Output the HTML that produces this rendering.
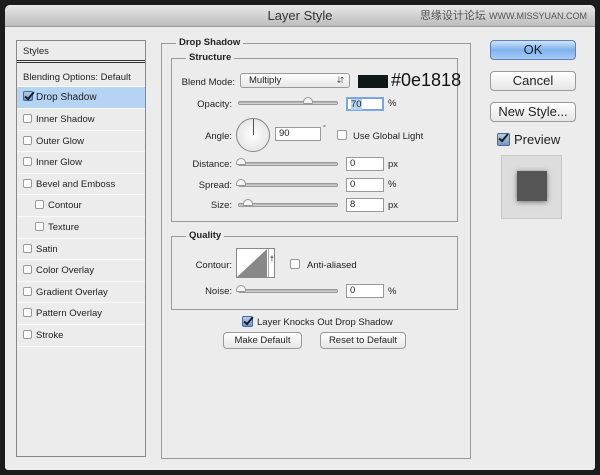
<!DOCTYPE html>
<html><head><meta charset="utf-8"><style>
*{margin:0;padding:0;box-sizing:border-box}
body{width:600px;height:475px;background:#1c1c1c;font-family:"Liberation Sans","Noto Sans CJK SC",sans-serif;font-size:9.5px;color:#222;position:relative;overflow:hidden}
.win{position:absolute;left:5px;top:5px;width:590px;height:465px;background:#ececec;border-radius:5px 5px 3px 3px;overflow:hidden}
.title{position:absolute;left:0;top:0;width:590px;height:22px;background:linear-gradient(#e8e8e8,#bdbdbd);border-bottom:1px solid #999;text-align:center;font-size:13px;line-height:22px;color:#333}
.wm{position:absolute;right:8px;top:4px;font-size:11px;color:#555;line-height:14px}
.a{position:absolute}
.panel{position:absolute;left:16px;top:40px;width:130px;height:417px;border:1px solid #888;background:#ececec}
.row{position:absolute;left:0;width:128px;height:21.6px;border-bottom:1px solid #fafafa;line-height:21px;padding-left:6px;font-size:9.5px}
.cb{display:inline-block;width:9px;height:9px;border:1px solid #999;border-radius:2px;background:#fff;vertical-align:-1px;margin-right:4px}
.chk{display:inline-block;width:10px;height:10px;border:1px solid #46a;border-radius:2px;background:linear-gradient(#bcd,#79b);vertical-align:-1px;margin-right:3px;position:relative}
.chk:after{content:"";position:absolute;left:3px;top:-2px;width:3px;height:8px;border:solid #123;border-width:0 2px 2px 0;transform:rotate(40deg)}
.chk.a{position:absolute}
.box{position:absolute;border:1px solid #999}
.leg{position:absolute;background:#ececec;font-weight:bold;padding:0 3px;font-size:9.5px}
.lbl{position:absolute;text-align:right;font-size:9.5px}
.sl{position:absolute;height:4px;border:1px solid #999;border-radius:2px;background:linear-gradient(#aaa,#ddd)}
.th{position:absolute;width:10px;height:7px;background:#f4f4f4;border:1px solid #999;border-radius:5px 5px 1px 1px}
.in{position:absolute;height:14px;border:1px solid #999;background:#fff;font-size:9.5px;line-height:12px;padding-left:3px}
.btn{position:absolute;border:1px solid #999;border-radius:4px;background:linear-gradient(#fff,#e6e6e6);text-align:center}
</style></head><body>
<div class="win">
<div class="title">Layer Style<div class="wm">思缘设计论坛 <span style="font-size:9px">WWW.MISSYUAN.COM</span></div></div>
</div>
<div class="panel">
<div class="row" style="top:0;height:22px;border-bottom:3px double #333">Styles</div>
<div class="row" style="top:26px;height:20px">Blending Options: Default</div>
<div class="row" style="top:46px;height:22px;background:#b5d3f3;font-size:10px"><span class="chk"></span>Drop Shadow</div>
<div class="row" style="top:68px"><span class="cb"></span>Inner Shadow</div>
<div class="row" style="top:89.6px"><span class="cb"></span>Outer Glow</div>
<div class="row" style="top:111.2px"><span class="cb"></span>Inner Glow</div>
<div class="row" style="top:132.8px"><span class="cb"></span>Bevel and Emboss</div>
<div class="row" style="top:154.4px;padding-left:18px"><span class="cb"></span>Contour</div>
<div class="row" style="top:176px;padding-left:18px"><span class="cb"></span>Texture</div>
<div class="row" style="top:197.6px"><span class="cb"></span>Satin</div>
<div class="row" style="top:219.2px"><span class="cb"></span>Color Overlay</div>
<div class="row" style="top:240.8px"><span class="cb"></span>Gradient Overlay</div>
<div class="row" style="top:262.4px"><span class="cb"></span>Pattern Overlay</div>
<div class="row" style="top:284px"><span class="cb"></span>Stroke</div>
</div>

<div class="box" style="left:161px;top:43px;width:310px;height:416px"></div>
<div class="leg" style="left:176px;top:37px">Drop Shadow</div>
<div class="box" style="left:171px;top:58px;width:287px;height:164px"></div>
<div class="leg" style="left:186px;top:52px">Structure</div>

<div class="lbl" style="left:170px;width:65px;top:77px">Blend Mode:</div>
<div class="btn" style="left:240px;top:73px;width:110px;height:15px;border-radius:3px;text-align:left;padding-left:8px;line-height:13px">Multiply<span style="position:absolute;right:5px;font-size:7px">&#8693;</span></div>
<div class="a" style="left:358px;top:75px;width:30px;height:13px;background:#0e1818"></div>
<div class="a" style="left:391px;top:70px;font-size:18px;color:#111;line-height:20px">#0e1818</div>

<div class="lbl" style="left:170px;width:62px;top:99px">Opacity:</div>
<div class="sl" style="left:238px;top:101px;width:100px"></div><div class="th" style="left:303px;top:97px"></div>
<div class="in" style="left:346px;top:97px;width:38px;border:2px solid #7aa7e0;background:#fff"><span style="background:#b5d3f3">70</span></div>
<div class="a" style="left:388px;top:98px">%</div>

<div class="lbl" style="left:170px;width:62px;top:131px">Angle:</div>
<div class="a" style="left:236px;top:118px;width:34px;height:34px;border:1px solid #888;border-radius:50%;background:radial-gradient(#fff,#ddd)"></div>
<div class="a" style="left:253px;top:119px;width:1px;height:16px;background:#555"></div>
<div class="in" style="left:275px;top:127px;width:46px">90</div>
<div class="a" style="left:323px;top:125px;font-size:7px">°</div>
<div class="cb a" style="left:337px;top:130px;width:10px;height:10px"></div>
<div class="a" style="left:353px;top:131px">Use Global Light</div>

<div class="lbl" style="left:170px;width:62px;top:159px">Distance:</div>
<div class="sl" style="left:238px;top:162px;width:100px"></div><div class="th" style="left:236px;top:158px"></div>
<div class="in" style="left:346px;top:157px;width:38px">0</div><div class="a" style="left:388px;top:159px">px</div>

<div class="lbl" style="left:170px;width:62px;top:180px">Spread:</div>
<div class="sl" style="left:238px;top:183px;width:100px"></div><div class="th" style="left:236px;top:179px"></div>
<div class="in" style="left:346px;top:178px;width:38px">0</div><div class="a" style="left:388px;top:179px">%</div>

<div class="lbl" style="left:170px;width:62px;top:200px">Size:</div>
<div class="sl" style="left:238px;top:203px;width:100px"></div><div class="th" style="left:243px;top:199px"></div>
<div class="in" style="left:346px;top:198px;width:38px">8</div><div class="a" style="left:388px;top:200px">px</div>

<div class="box" style="left:171px;top:236px;width:287px;height:74px"></div>
<div class="leg" style="left:186px;top:230px">Quality</div>
<div class="lbl" style="left:170px;width:62px;top:260px">Contour:</div>
<div class="a" style="left:236px;top:248px;width:39px;height:30px;border:1px solid #888;background:#fff;overflow:hidden"><div style="position:absolute;left:0;top:0;width:0;height:0;border-left:30px solid transparent;border-bottom:28px solid #888"></div><div style="position:absolute;left:31px;top:0;width:1px;height:30px;background:#aaa"></div><div style="position:absolute;left:33px;top:7px;font-size:7px;font-weight:bold">&#8224;</div></div>
<div class="cb a" style="left:290px;top:259px;width:10px;height:10px"></div>
<div class="a" style="left:307px;top:260px">Anti-aliased</div>
<div class="lbl" style="left:170px;width:62px;top:286px">Noise:</div>
<div class="sl" style="left:238px;top:289px;width:100px"></div><div class="th" style="left:236px;top:285px"></div>
<div class="in" style="left:346px;top:284px;width:38px">0</div><div class="a" style="left:388px;top:286px">%</div>

<div class="chk a" style="left:242px;top:316px;width:11px;height:11px"></div>
<div class="a" style="left:257px;top:317px">Layer Knocks Out Drop Shadow</div>
<div class="btn" style="left:223px;top:332px;width:79px;height:17px;line-height:15px">Make Default</div>
<div class="btn" style="left:320px;top:332px;width:86px;height:17px;line-height:15px">Reset to Default</div>

<div class="btn" style="left:490px;top:40px;width:86px;height:20px;line-height:18px;font-size:13px;background:linear-gradient(#cfe3fa,#7fb2ee 50%,#a9cdf5);border-color:#5b82b5">OK</div>
<div class="btn" style="left:490px;top:71px;width:86px;height:20px;line-height:18px;font-size:13px">Cancel</div>
<div class="btn" style="left:490px;top:102px;width:86px;height:20px;line-height:18px;font-size:13px">New Style...</div>
<div class="chk a" style="left:497px;top:133px;width:13px;height:13px"></div>
<div class="a" style="left:514px;top:132px;font-size:13px">Preview</div>
<div class="a" style="left:501px;top:155px;width:61px;height:64px;background:#ddd;border:1px solid #c8c8c8"></div>
<div class="a" style="left:517px;top:171px;width:30px;height:30px;background:#555;box-shadow:0 1px 5px rgba(0,0,0,.5)"></div>
</body></html>
